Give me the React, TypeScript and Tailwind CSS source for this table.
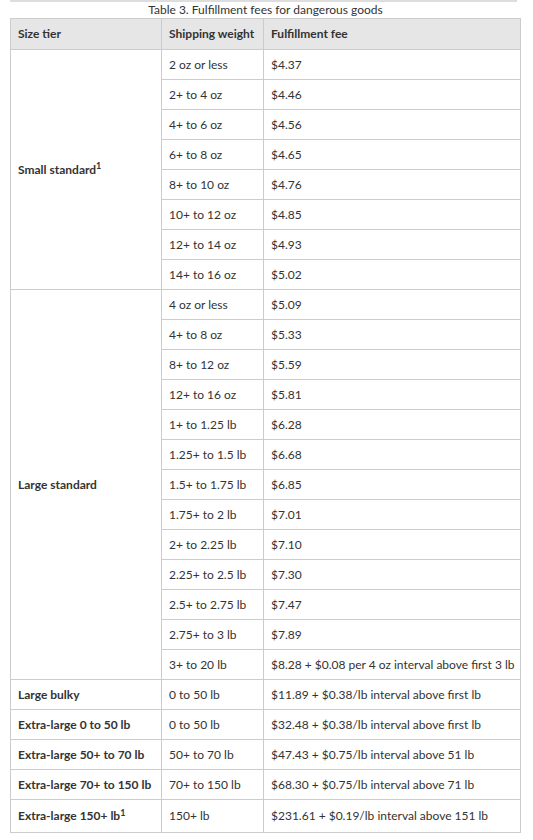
import React from "react";

type Row = { weight: string; fee: string };

const smallStandard: Row[] = [
  { weight: "2 oz or less", fee: "$4.37" },
  { weight: "2+ to 4 oz", fee: "$4.46" },
  { weight: "4+ to 6 oz", fee: "$4.56" },
  { weight: "6+ to 8 oz", fee: "$4.65" },
  { weight: "8+ to 10 oz", fee: "$4.76" },
  { weight: "10+ to 12 oz", fee: "$4.85" },
  { weight: "12+ to 14 oz", fee: "$4.93" },
  { weight: "14+ to 16 oz", fee: "$5.02" },
];

const largeStandard: Row[] = [
  { weight: "4 oz or less", fee: "$5.09" },
  { weight: "4+ to 8 oz", fee: "$5.33" },
  { weight: "8+ to 12 oz", fee: "$5.59" },
  { weight: "12+ to 16 oz", fee: "$5.81" },
  { weight: "1+ to 1.25 lb", fee: "$6.28" },
  { weight: "1.25+ to 1.5 lb", fee: "$6.68" },
  { weight: "1.5+ to 1.75 lb", fee: "$6.85" },
  { weight: "1.75+ to 2 lb", fee: "$7.01" },
  { weight: "2+ to 2.25 lb", fee: "$7.10" },
  { weight: "2.25+ to 2.5 lb", fee: "$7.30" },
  { weight: "2.5+ to 2.75 lb", fee: "$7.47" },
  { weight: "2.75+ to 3 lb", fee: "$7.89" },
  { weight: "3+ to 20 lb", fee: "$8.28 + $0.08 per 4 oz interval above first 3 lb" },
];

const singles: { tier: string; sup?: boolean; weight: string; fee: string }[] = [
  { tier: "Large bulky", weight: "0 to 50 lb", fee: "$11.89 + $0.38/lb interval above first lb" },
  { tier: "Extra-large 0 to 50 lb", weight: "0 to 50 lb", fee: "$32.48 + $0.38/lb interval above first lb" },
  { tier: "Extra-large 50+ to 70 lb", weight: "50+ to 70 lb", fee: "$47.43 + $0.75/lb interval above 51 lb" },
  { tier: "Extra-large 70+ to 150 lb", weight: "70+ to 150 lb", fee: "$68.30 + $0.75/lb interval above 71 lb" },
  { tier: "Extra-large 150+ lb", sup: true, weight: "150+ lb", fee: "$231.61 + $0.19/lb interval above 151 lb" },
];

const td = "border border-[#cccccc] px-[7px] h-[30px] align-middle whitespace-nowrap";

function Group({ tier, sup, rows }: { tier: string; sup?: boolean; rows: Row[] }) {
  return (
    <>
      {rows.map((r, i) => (
        <tr key={r.weight}>
          {i === 0 && (
            <td rowSpan={rows.length} className={`${td} font-bold`}>
              {tier}
              {sup && <sup className="text-[9px] font-bold">1</sup>}
            </td>
          )}
          <td className={td}>{r.weight}</td>
          <td className={td}>{r.fee}</td>
        </tr>
      ))}
    </>
  );
}

export default function App() {
  return (
    <div
      className="w-[533px] bg-white text-[#333333] text-[12px] leading-[16px]"
      style={{ fontFamily: 'Lato, "Noto Sans", Arial, sans-serif' }}
    >
      <div className="mx-[10px] w-[507px] border-t-2 border-[#dddddd]" />
      <table className="ml-[10px] w-[511px] border-collapse table-fixed">
        <caption className="h-[16px] text-[12px] leading-[16px] text-[#333333]">
          Table 3. Fulfillment fees for dangerous goods
        </caption>
        <colgroup>
          <col className="w-[151px]" />
          <col className="w-[102px]" />
          <col />
        </colgroup>
        <thead>
          <tr className="bg-[#e6e6e6]">
            <th className={`${td} h-[31px] text-left font-bold`}>Size tier</th>
            <th className={`${td} h-[31px] text-left font-bold`}>Shipping weight</th>
            <th className={`${td} h-[31px] text-left font-bold`}>Fulfillment fee</th>
          </tr>
        </thead>
        <tbody>
          <Group tier="Small standard" sup rows={smallStandard} />
          <Group tier="Large standard" rows={largeStandard} />
          {singles.map((s) => (
            <tr key={s.tier}>
              <td className={`${td} font-bold ${s.sup ? "h-[33px]" : ""}`}>
                {s.tier}
                {s.sup && <sup className="text-[9px] font-bold">1</sup>}
              </td>
              <td className={td}>{s.weight}</td>
              <td className={td}>{s.fee}</td>
            </tr>
          ))}
        </tbody>
      </table>
    </div>
  );
}
